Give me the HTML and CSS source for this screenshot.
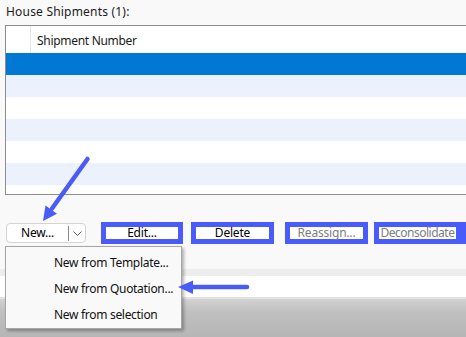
FILE: index.html
```html
<!DOCTYPE html>
<html>
<head>
<meta charset="utf-8">
<link rel="stylesheet" href="styles.css">
</head>
<body>
<div class="page">
  <div class="label">House Shipments (1):</div>
  <div class="grid">
    <div class="head">
      <div class="head-first"></div>
      <div class="head-cell">Shipment Number</div>
    </div>
    <div class="row sel"></div>
    <div class="row alt"></div>
    <div class="row"></div>
    <div class="row alt"></div>
    <div class="row"></div>
    <div class="row alt"></div>
    <div class="row short"></div>
  </div>
  <div class="buttons">
    <div class="split">
      <div class="split-main">New...</div>
      <div class="split-sep"></div>
      <div class="split-drop">
        <svg width="9" height="5" viewBox="0 0 9 5"><path d="M0.5 0.5 L4.5 4.5 L8.5 0.5" fill="none" stroke="#5a5a5a" stroke-width="1"/></svg>
      </div>
    </div>
    <div class="hl hl-edit"><span>Edit...</span></div>
    <div class="hl hl-delete"><span>Delete</span></div>
    <div class="hl hl-reassign disabled"><span>Reassign...</span></div>
    <div class="hl hl-decon disabled"><span>Deconsolidate</span></div>
  </div>
  <div class="band-gray"></div>
  <div class="band-white"></div>
  <div class="band-line"></div>
  <div class="footer"></div>
</div>
<div class="menu">
  <div class="menu-item">New from Template...</div>
  <div class="menu-item">New from Quotation...</div>
  <div class="menu-item">New from selection</div>
</div>
<svg class="arrows" width="466" height="337" viewBox="0 0 466 337">
  <line x1="87.5" y1="159" x2="52" y2="208.5" stroke="#4a5cf6" stroke-width="4.5" stroke-linecap="round"/>
  <polygon points="43,221 45.5,205.5 57,213.7" fill="#4a5cf6"/>
  <line x1="247" y1="287" x2="190" y2="287" stroke="#4a5cf6" stroke-width="4.5" stroke-linecap="round"/>
  <polygon points="178,287 193,280.5 193,294" fill="#4a5cf6"/>
</svg>
</body>
</html>
```

FILE: styles.css
```css
html, body {
  margin: 0;
  padding: 0;
}
body {
  width: 466px;
  height: 337px;
  overflow: hidden;
  background: #f9f9f9;
  font-family: "Noto Sans", "Open Sans", sans-serif;
  font-size: 12px;
  color: #000;
  position: relative;
}
.page {
  display: flex;
  flex-direction: column;
  height: 337px;
}
.label {
  height: 25px;
  line-height: 24px;
  padding-left: 6px;
  color: #1a1a1a;
  white-space: nowrap;
  letter-spacing: 0.2px;
}
.grid {
  margin-left: 5px;
  border: 1px solid #8d8d8d;
  border-right: none;
  background: #fff;
  display: flex;
  flex-direction: column;
}
.head {
  height: 27px;
  display: flex;
  background: #fff;
}
.head-first {
  width: 24px;
  border-right: 1px solid #e6e6e6;
}
.head-cell {
  padding-left: 6px;
  line-height: 29px;
  color: #1a1a1a;
  letter-spacing: -0.3px;
}
.row {
  height: 22px;
  background: #fff;
}
.row.alt {
  background: #ebf2fd;
}
.row.sel {
  background: #0078d4;
}
.row.short {
  height: 9px;
}
.buttons {
  margin-top: 27px;
  height: 22px;
  display: flex;
  align-items: center;
  padding-left: 6px;
}
.split {
  width: 80px;
  height: 20px;
  box-sizing: border-box;
  border: 1px solid #d3d3d3;
  border-radius: 4px;
  background: #fff;
  display: flex;
  align-items: center;
}
.split-main {
  width: 61px;
  text-align: center;
  line-height: 18px;
  letter-spacing: -0.2px;
}
.split-sep {
  width: 1px;
  height: 15px;
  background: #8a8a8a;
}
.split-drop {
  flex: 1;
  display: flex;
  justify-content: center;
  align-items: center;
  padding-top: 1px;
}
.split-drop svg {
  display: block;
}
.hl {
  height: 22px;
  box-sizing: border-box;
  border: 5px solid #4a5bfb;
  background: #fff;
  display: flex;
  align-items: center;
  justify-content: center;
  overflow: visible;
}
.hl span {
  line-height: 12px;
  white-space: nowrap;
  letter-spacing: -0.2px;
}
.hl-edit {
  width: 82px;
  margin-left: 15px;
}
.hl-delete {
  width: 83px;
  margin-left: 8px;
}
.hl-reassign {
  width: 83px;
  margin-left: 11px;
}
.hl-decon {
  width: 92px;
  margin-left: 6px;
  border-right-width: 10px;
}
.hl-decon span {
  letter-spacing: -0.5px;
}
.disabled span {
  color: #7d7d7d;
}
.band-gray {
  margin-top: 25px;
  height: 7px;
  background: #ededed;
}
.band-white {
  height: 21px;
  background: #fff;
}
.band-line {
  height: 2px;
  background: #e2e2e2;
}
.footer {
  flex: 1;
  background: linear-gradient(#d2d2d2, #bfbfbf 35%, #b6b6b6);
}
.menu {
  position: absolute;
  left: 5px;
  top: 246px;
  width: 177px;
  height: 83px;
  box-sizing: border-box;
  border: 1px solid #a6a6a6;
  background: #f9f9f9;
  padding-top: 3px;
  box-shadow: 2px 2px 3px rgba(0, 0, 0, 0.3);
}
.menu-item {
  height: 26px;
  line-height: 26px;
  padding-left: 48px;
  white-space: nowrap;
  color: #111;
  letter-spacing: -0.3px;
}
.arrows {
  position: absolute;
  left: 0;
  top: 0;
  pointer-events: none;
}
```
